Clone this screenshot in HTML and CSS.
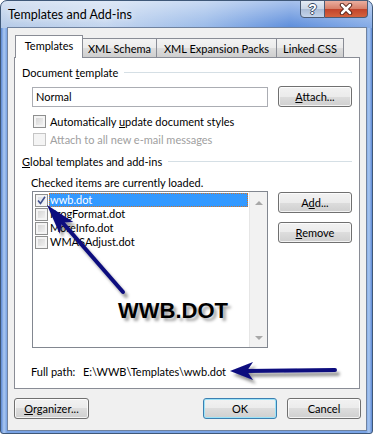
FILE: index.html
```html
<!DOCTYPE html>
<html lang="en">
<head>
  <meta charset="UTF-8">
  <title>Templates and Add-ins</title>
  <link rel="stylesheet" href="styles.css">
</head>
<body>
  <div class="window">
    <div class="titlebar">
      <span class="title">Templates and Add-ins</span>
      <div class="caption-buttons">
        <div class="cap-btn help">?</div>
        <div class="cap-btn close">
          <svg width="14" height="12" viewBox="0 0 14 12">
            <path d="M3 2 L11 10 M11 2 L3 10" stroke="#4a1810" stroke-width="4.4" stroke-linecap="round"/>
            <path d="M3 2 L11 10 M11 2 L3 10" stroke="#fff" stroke-width="2.6" stroke-linecap="round"/>
          </svg>
        </div>
      </div>
    </div>

    <div class="client">
      <div class="tabs">
        <div class="tab active tab-templates">Templates</div>
        <div class="tab tab-schema">XML Schema</div>
        <div class="tab tab-packs">XML Expansion Packs</div>
        <div class="tab tab-css">Linked CSS</div>
      </div>

      <div class="panel">
        <div class="group">Document <u>t</u>emplate</div>
        <div class="template-row">
          <div class="textbox">Normal</div>
          <div class="btn"><span><u>A</u>ttach...</span></div>
        </div>
        <div class="check-row">
          <span class="checkbox"></span>
          <span>Automatically <u>u</u>pdate document styles</span>
        </div>
        <div class="check-row disabled">
          <span class="checkbox"></span>
          <span>Attach to all new e-mail messages</span>
        </div>

        <div class="group group-global"><u>G</u>lobal templates and add-ins</div>
        <div class="hint">Checked items are currently loaded.</div>
        <div class="addins">
          <div class="listbox">
            <div class="items">
              <div class="item selected">
                <span class="checkbox checked">
                  <svg width="9" height="9" viewBox="0 0 9 9"><path d="M1 4.5 L3.5 7.5 L8 0.8" fill="none" stroke="#3f4f8c" stroke-width="1.6"/></svg>
                </span>
                <span class="item-name">wwb.dot</span>
              </div>
              <div class="item">
                <span class="checkbox"></span>
                <span class="item-name">ProgFormat.dot</span>
              </div>
              <div class="item">
                <span class="checkbox"></span>
                <span class="item-name">MoreInfo.dot</span>
              </div>
              <div class="item">
                <span class="checkbox"></span>
                <span class="item-name">WMASAdjust.dot</span>
              </div>
            </div>
            <div class="scrollbar">
              <span class="arrow-up"></span>
              <span class="arrow-down"></span>
            </div>
          </div>
          <div class="side-buttons">
            <div class="btn"><span>A<u>d</u>d...</span></div>
            <div class="btn"><span><u>R</u>emove</span></div>
          </div>
        </div>

        <div class="full-path">
          <span class="path-label">Full path:</span>
          <span>E:\WWB\Templates\wwb.dot</span>
        </div>
      </div>

      <div class="footer">
        <div class="btn btn-wide"><span><u>O</u>rganizer...</span></div>
        <div class="btn default"><span>OK</span></div>
        <div class="btn"><span>Cancel</span></div>
      </div>
    </div>

    <!-- callout arrows drawn over the dialog -->
    <svg class="annotations" width="373" height="434" viewBox="0 0 373 434">
      <defs>
        <filter id="drop" x="-30%" y="-30%" width="160%" height="160%">
          <feDropShadow dx="3" dy="4" stdDeviation="1.8" flood-color="#000" flood-opacity="0.4"/>
        </filter>
      </defs>
      <g filter="url(#drop)" fill="#0c0c7e">
        <path d="M123 292 L62 222" stroke="#0c0c7e" stroke-width="4" stroke-linecap="round"/>
        <polygon points="47,205 59.7,233.7 62,222.5 73.3,221.9"/>
      </g>
      <g filter="url(#drop)" fill="#0c0c7e">
        <path d="M335 370 L246 371" stroke="#0c0c7e" stroke-width="4" stroke-linecap="round"/>
        <polygon points="230,371 253,362 247,371 253,380"/>
      </g>
    </svg>
    <div class="callout">WWB.DOT</div>
  </div>
</body>
</html>
```

FILE: styles.css
```css
body {
  margin: 0;
  background: #fff;
  font-family: Lato, "Liberation Sans", sans-serif;
  font-size: 11px;
  color: #000;
}

u {
  text-decoration: underline;
  text-underline-offset: 1px;
}

.window {
  position: relative;
  width: 373px;
  height: 434px;
  box-sizing: border-box;
  border: 1px solid #3f5878;
  border-radius: 7px 7px 3px 3px;
  padding: 0 5px 2px 6px;
  display: flex;
  flex-direction: column;
  background:
    linear-gradient(to bottom, rgba(255, 255, 255, 0.45), rgba(255, 255, 255, 0) 26px) top / 100% 26px no-repeat,
    linear-gradient(to right, #b6cbe8 0%, #c4d6ef 28%, #9bbbe9 55%, #5f8fdc 78%, #86ace7 100%) top / 100% 27px no-repeat,
    linear-gradient(to right, #5d8ad6 0, #a9c7f0 3px, #78a2e4 6px, #7aa4e6 calc(100% - 6px), #a9c7f0 calc(100% - 3px), #5d8ad6 100%);
}

.titlebar {
  height: 26px;
  display: flex;
  align-items: flex-start;
}

.title {
  padding: 6px 0 0 1px;
  font-size: 12.5px;
  line-height: 16px;
  text-shadow: 0 0 6px rgba(255, 255, 255, 0.9);
}

.caption-buttons {
  margin-left: auto;
  margin-top: -1px;
  margin-right: -1px;
  display: flex;
}

.cap-btn {
  height: 18px;
  box-sizing: border-box;
  border: 1px solid #4b5c76;
  display: flex;
  align-items: center;
  justify-content: center;
}

.help {
  width: 25px;
  border-radius: 0 0 0 4px;
  background: linear-gradient(#e4ebf5, #cbd7e8 48%, #aabcd6 50%, #c4d4ea);
  color: #fff;
  font: bold 14px "Liberation Sans", sans-serif;
  text-shadow: 1px 0 #3b4c66, -1px 0 #3b4c66, 0 1px #3b4c66, 0 -1px #3b4c66;
}

.close {
  width: 43px;
  border-left: none;
  border-radius: 0 0 4px 0;
  background: linear-gradient(#eaae9f, #d7806a 48%, #c1432b 50%, #d4633f);
}

.client {
  flex: 1;
  background: #f0f0f0;
  border: 1px solid #6f829f;
  padding: 7px 6px 0 6px;
  display: flex;
  flex-direction: column;
}

.tabs {
  display: flex;
  align-items: flex-end;
  height: 22px;
  padding-left: 1px;
  position: relative;
  z-index: 1;
}

.tab {
  box-sizing: border-box;
  height: 19px;
  border: 1px solid #898c95;
  border-bottom: none;
  margin-left: -1px;
  display: flex;
  align-items: center;
  justify-content: center;
  background: linear-gradient(#f3f3f3, #ebebeb 50%, #dddddd 50%, #cfcfcf);
}

.tab.active {
  height: 23px;
  margin-left: 0;
  margin-bottom: -1px;
  background: #fff;
  position: relative;
  z-index: 1;
  padding-bottom: 3px;
}

.tab-templates { width: 68px; }
.tab-schema { width: 75px; }
.tab-packs { width: 121px; }
.tab-css { width: 68px; }

.panel {
  height: 332px;
  box-sizing: border-box;
  border: 1px solid #898c95;
  background: #fff;
  padding: 7px 7px 0 7px;
}

.group {
  display: flex;
  align-items: center;
  height: 15px;
  white-space: pre;
}

.group::after {
  content: "";
  flex: 1;
  margin-left: 6px;
  border-top: 1px solid #d5dfe5;
}

.group-global {
  margin-top: 8px;
}

.template-row {
  display: flex;
  align-items: center;
  gap: 10px;
  height: 21px;
  margin-top: 6px;
  padding-left: 10px;
}

.textbox {
  width: 236px;
  height: 20px;
  box-sizing: border-box;
  border: 1px solid #abadb3;
  padding-left: 3px;
  line-height: 18px;
}

.btn {
  width: 74px;
  height: 21px;
  box-sizing: border-box;
  border: 1px solid #707070;
  border-radius: 3px;
  background: linear-gradient(#f2f2f2, #ebebeb 50%, #dddddd 50%, #cfcfcf);
  box-shadow: inset 0 0 0 1px rgba(255, 255, 255, 0.75);
  display: flex;
  align-items: center;
  justify-content: center;
}

.btn.default {
  border-color: #3c7fb1;
  box-shadow: inset 0 0 0 1px #9ce3f8;
}

.btn-wide {
  width: 75px;
}

.check-row {
  display: flex;
  align-items: center;
  gap: 4px;
  height: 14px;
  margin-top: 7px;
  padding-left: 11px;
}

.check-row + .check-row {
  margin-top: 4px;
}

.checkbox {
  width: 13px;
  height: 13px;
  box-sizing: border-box;
  flex: none;
  border: 1px solid #8e8f8f;
  background: linear-gradient(135deg, #cfcfcf, #f7f7f7);
  box-shadow: inset 0 0 0 2px #f4f4f4;
  display: flex;
  align-items: center;
  justify-content: center;
}

.checkbox.checked {
  background: linear-gradient(135deg, #d6dbe4, #f7f8fa);
}

.disabled {
  color: #a0a0a0;
}

.disabled .checkbox {
  border-color: #c5c5c5;
  background: #f4f4f4;
}

.hint {
  height: 15px;
  line-height: 15px;
  margin-top: 6px;
  padding-left: 9px;
}

.addins {
  display: flex;
  gap: 10px;
  margin-top: 1px;
  padding-left: 10px;
}

.listbox {
  width: 236px;
  height: 157px;
  box-sizing: border-box;
  border: 1px solid #828790;
  display: flex;
}

.items {
  flex: 1;
  padding: 1px 1px 0 1px;
}

.item {
  display: flex;
  align-items: center;
  height: 14px;
}

.item .checkbox {
  margin-left: 1px;
}

.item-name {
  flex: 1;
  height: 14px;
  line-height: 14px;
  margin-left: 1px;
  padding-left: 1px;
}

.item.selected .item-name {
  background: #3399ff;
  color: #fff;
  outline: 1px dotted #d0742a;
  outline-offset: -1px;
}

.scrollbar {
  width: 17px;
  background: #f2f2f2;
  border-left: 1px solid #e6e6e6;
  display: flex;
  flex-direction: column;
  align-items: center;
  justify-content: space-between;
  padding: 9px 0 7px;
}

.arrow-up,
.arrow-down {
  width: 0;
  height: 0;
  border-left: 4px solid transparent;
  border-right: 4px solid transparent;
}

.arrow-up {
  border-bottom: 4px solid #a8a8a8;
}

.arrow-down {
  border-top: 4px solid #a8a8a8;
}

.side-buttons {
  display: flex;
  flex-direction: column;
  gap: 9px;
  margin-top: 1px;
}

.full-path {
  display: flex;
  height: 15px;
  line-height: 15px;
  margin-top: 16px;
  padding-left: 9px;
}

.path-label {
  width: 52px;
}

.footer {
  display: flex;
  gap: 10px;
  margin-top: 9px;
  margin-right: -1px;
}

.footer .default {
  margin-left: auto;
}

.annotations {
  position: absolute;
  left: -1px;
  top: -1px;
  pointer-events: none;
  overflow: visible;
}

.callout {
  position: absolute;
  left: 117px;
  top: 299px;
  font: bold 22px/22px "Liberation Sans", Arial, sans-serif;
  text-shadow: 3px 3px 3px rgba(0, 0, 0, 0.35);
}
```
